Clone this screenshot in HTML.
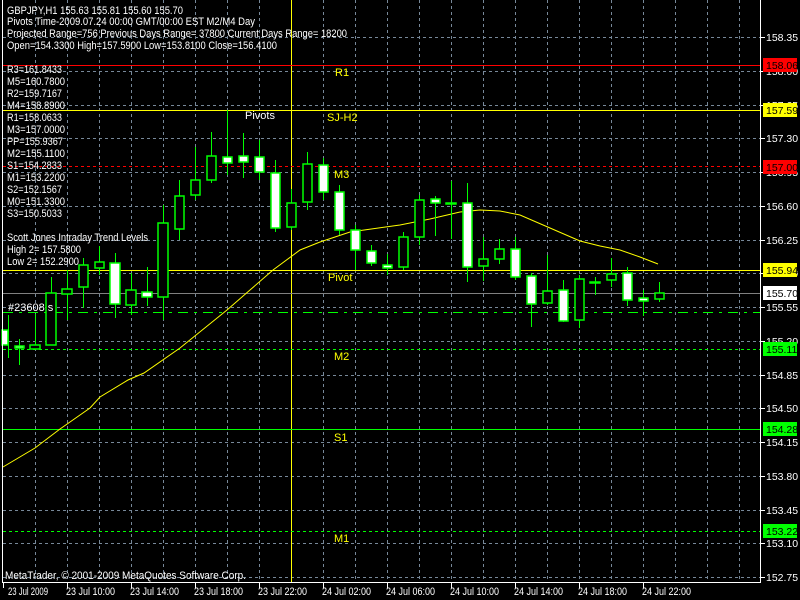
<!DOCTYPE html>
<html><head><meta charset="utf-8"><style>
html,body{margin:0;padding:0;background:#000;width:800px;height:600px;overflow:hidden}
svg{display:block}
text{font-family:"Liberation Sans","DejaVu Sans",sans-serif;font-size:11px}
.ax text{font-size:10.5px}
</style></head><body>
<svg width="800" height="600" xmlns="http://www.w3.org/2000/svg">
<rect width="800" height="600" fill="#000"/>
<g stroke="#778899" stroke-width="1" stroke-dasharray="3,3">
<path d="M3 37.5H760M3 71.5H760M3 105.5H760M3 138.5H760M3 172.5H760M3 206.5H760M3 240.5H760M3 273.5H760M3 307.5H760M3 341.5H760M3 375.5H760M3 408.5H760M3 442.5H760M3 476.5H760M3 510.5H760M3 543.5H760M3 577.5H760"/>
<path d="M35.5 0V582M67.5 0V582M99.5 0V582M131.5 0V582M163.5 0V582M195.5 0V582M227.5 0V582M259.5 0V582M323.5 0V582M355.5 0V582M387.5 0V582M419.5 0V582M451.5 0V582M483.5 0V582M515.5 0V582M547.5 0V582M579.5 0V582M611.5 0V582M643.5 0V582M675.5 0V582M707.5 0V582M739.5 0V582"/>
</g>
<path d="M291.5 0V582" stroke="#ffff00"/>
<path d="M3 65.5H760" stroke="#ff0000"/>
<path d="M3 110.5H760" stroke="#ffff00"/>
<path d="M3 166.5H760" stroke="#ff0000" stroke-dasharray="3,3"/>
<path d="M3 270.5H760" stroke="#ffff00"/>
<path d="M3 293.5H760" stroke="#808080"/>
<path d="M3 312.5H760" stroke="#00ff00" stroke-dasharray="10,6,3,6"/>
<path d="M3 349.5H760" stroke="#00ff00" stroke-dasharray="3,3"/>
<path d="M3 429.5H760" stroke="#00ff00"/>
<path d="M3 531.5H760" stroke="#00ff00" stroke-dasharray="3,3"/>
<polyline fill="none" stroke="#ffff00" stroke-width="1" points="3,467 35,448 60,429 90,408 100,397 128,380 144,373 180,348 227,310 250,290 273,270 300,250 320,242 350,232 400,225 430,219 460,212 480,210 500,211 520,215 550,228 580,241 600,246 620,250 640,257 658,264"/>
<g stroke="#00ff00" stroke-width="1">
<path d="M8.5 315V358M19.5 339V365M35.5 314V349M51.5 277V345M67.5 270V320M83.5 258V308M99.5 246V275M115.5 253V318M131.5 273V315M147.5 267V306M163.5 205V320M179.5 180V240M195.5 147V200M211.5 132V183M227.5 110V175M243.5 133V178M259.5 140V180M275.5 160V232M291.5 189V230M307.5 152V210M323.5 158V200M339.5 185V235M355.5 225V270M371.5 245V266M387.5 254V275M403.5 232V270M419.5 195V245M435.5 196V236M451.5 181V239M467.5 183V282M483.5 237V281M499.5 239V264M515.5 237V280M531.5 273V327M547.5 255V305M563.5 280V322M579.5 275V328M595.5 277V295M611.5 258V287M627.5 267V306M643.5 290V316M659.5 282V302"/>
</g>
<g stroke="#00ff00" stroke-width="1.5">
<rect x="2" y="330" width="6" height="15" fill="#fff"/>
<rect x="15" y="346" width="9" height="2" fill="#fff"/>
<rect x="30" y="345" width="10" height="4" fill="#000"/>
<rect x="46" y="293" width="10" height="52" fill="#000"/>
<rect x="62" y="289" width="10" height="5" fill="#000"/>
<rect x="79" y="265" width="9" height="22" fill="#000"/>
<rect x="95" y="262" width="9" height="6" fill="#000"/>
<rect x="110" y="263" width="10" height="41" fill="#fff"/>
<rect x="126" y="290" width="10" height="15" fill="#000"/>
<rect x="142" y="292" width="10" height="5" fill="#fff"/>
<rect x="158" y="223" width="10" height="74" fill="#000"/>
<rect x="175" y="196" width="9" height="33" fill="#000"/>
<rect x="191" y="180" width="9" height="15" fill="#000"/>
<rect x="207" y="156" width="9" height="24" fill="#000"/>
<rect x="223" y="157" width="9" height="6" fill="#fff"/>
<rect x="239" y="156" width="9" height="6" fill="#fff"/>
<rect x="255" y="157" width="9" height="15" fill="#fff"/>
<rect x="271" y="173" width="9" height="55" fill="#fff"/>
<rect x="287" y="203" width="9" height="24" fill="#000"/>
<rect x="303" y="164" width="9" height="38" fill="#000"/>
<rect x="319" y="165" width="9" height="27" fill="#fff"/>
<rect x="335" y="192" width="9" height="38" fill="#fff"/>
<rect x="351" y="230" width="9" height="20" fill="#fff"/>
<rect x="367" y="251" width="9" height="12" fill="#fff"/>
<rect x="383" y="265" width="9" height="3" fill="#fff"/>
<rect x="399" y="237" width="9" height="30" fill="#000"/>
<rect x="415" y="200" width="9" height="37" fill="#000"/>
<rect x="431" y="199" width="9" height="4" fill="#fff"/>
<rect x="446" y="203" width="10" height="1" fill="#000"/>
<rect x="463" y="203" width="9" height="64" fill="#fff"/>
<rect x="479" y="259" width="9" height="7" fill="#000"/>
<rect x="495" y="249" width="9" height="10" fill="#000"/>
<rect x="511" y="249" width="9" height="28" fill="#fff"/>
<rect x="527" y="276" width="9" height="28" fill="#fff"/>
<rect x="543" y="291" width="9" height="12" fill="#000"/>
<rect x="559" y="290" width="9" height="31" fill="#fff"/>
<rect x="575" y="279" width="9" height="41" fill="#000"/>
<rect x="590" y="282" width="10" height="1" fill="#000"/>
<rect x="607" y="274" width="9" height="6" fill="#000"/>
<rect x="623" y="273" width="9" height="27" fill="#fff"/>
<rect x="639" y="298" width="9" height="3" fill="#fff"/>
<rect x="655" y="293" width="9" height="6" fill="#000"/>
</g>
<path d="M2.5 0V582.5H760.5V0" fill="none" stroke="#fff"/>
<g stroke="#fff"><path d="M3.5 583V588M67.5 583V588M131.5 583V588M195.5 583V588M259.5 583V588M323.5 583V588M387.5 583V588M451.5 583V588M515.5 583V588M579.5 583V588M643.5 583V588"/></g>
<g fill="#fff">
<text x="8" y="595" textLength="40" lengthAdjust="spacingAndGlyphs">23 Jul 2009</text>
<text x="66" y="595" textLength="49" lengthAdjust="spacingAndGlyphs">23 Jul 10:00</text>
<text x="130" y="595" textLength="49" lengthAdjust="spacingAndGlyphs">23 Jul 14:00</text>
<text x="194" y="595" textLength="49" lengthAdjust="spacingAndGlyphs">23 Jul 18:00</text>
<text x="258" y="595" textLength="49" lengthAdjust="spacingAndGlyphs">23 Jul 22:00</text>
<text x="322" y="595" textLength="49" lengthAdjust="spacingAndGlyphs">24 Jul 02:00</text>
<text x="386" y="595" textLength="49" lengthAdjust="spacingAndGlyphs">24 Jul 06:00</text>
<text x="450" y="595" textLength="49" lengthAdjust="spacingAndGlyphs">24 Jul 10:00</text>
<text x="514" y="595" textLength="49" lengthAdjust="spacingAndGlyphs">24 Jul 14:00</text>
<text x="578" y="595" textLength="49" lengthAdjust="spacingAndGlyphs">24 Jul 18:00</text>
<text x="642" y="595" textLength="49" lengthAdjust="spacingAndGlyphs">24 Jul 22:00</text>
</g>
<g stroke="#fff"><path d="M761 37.5H765M761 71.5H765M761 105.5H765M761 138.5H765M761 172.5H765M761 206.5H765M761 240.5H765M761 273.5H765M761 307.5H765M761 341.5H765M761 375.5H765M761 408.5H765M761 442.5H765M761 476.5H765M761 510.5H765M761 543.5H765M761 577.5H765"/></g>
<g fill="#fff" class="ax">
<text x="766" y="41">158.35</text><text x="766" y="75">158.00</text><text x="766" y="109">157.65</text><text x="766" y="142">157.30</text><text x="766" y="176">156.95</text><text x="766" y="210">156.60</text><text x="766" y="244">156.25</text><text x="766" y="277">155.90</text><text x="766" y="311">155.55</text><text x="766" y="345">155.20</text><text x="766" y="379">154.85</text><text x="766" y="412">154.50</text><text x="766" y="446">154.15</text><text x="766" y="480">153.80</text><text x="766" y="514">153.45</text><text x="766" y="547">153.10</text><text x="766" y="581">152.75</text>
</g>
<g class="ax">
<rect x="763" y="58" width="34" height="14" fill="#ff0000"/><text x="766" y="69" fill="#000">158.06</text>
<rect x="763" y="103" width="34" height="14" fill="#ffff00"/><text x="766" y="114" fill="#000">157.59</text>
<rect x="763" y="160" width="34" height="14" fill="#ff0000"/><text x="766" y="171" fill="#000">157.00</text>
<rect x="763" y="263" width="34" height="14" fill="#ffff00"/><text x="766" y="274" fill="#000">155.94</text>
<rect x="763" y="286" width="34" height="14" fill="#fff"/><text x="766" y="297" fill="#000">155.70</text>
<rect x="763" y="342" width="34" height="14" fill="#00ff00"/><text x="766" y="353" fill="#000">155.11</text>
<rect x="763" y="422" width="34" height="14" fill="#00ff00"/><text x="766" y="433" fill="#000">154.28</text>
<rect x="763" y="524" width="34" height="14" fill="#00ff00"/><text x="766" y="535" fill="#000">153.22</text>
</g>
<g fill="#fff">
<text x="7" y="14" textLength="176" lengthAdjust="spacingAndGlyphs">GBPJPY,H1  155.63 155.81 155.60 155.70</text>
<text x="7" y="25" textLength="248" lengthAdjust="spacingAndGlyphs">Pivots Time-2009.07.24 00:00 GMT/00:00 EST M2/M4 Day</text>
<text x="7" y="37" textLength="340" lengthAdjust="spacingAndGlyphs">Projected Range=756 Previous Days Range= 37800 Current Days Range= 18200</text>
<text x="7" y="49" textLength="270" lengthAdjust="spacingAndGlyphs">Open=154.3300 High=157.5900 Low=153.8100 Close=156.4100</text>
<text x="7" y="73" textLength="55" lengthAdjust="spacingAndGlyphs">R3=161.8433</text><text x="7" y="85" textLength="58" lengthAdjust="spacingAndGlyphs">M5=160.7800</text><text x="7" y="97" textLength="55" lengthAdjust="spacingAndGlyphs">R2=159.7167</text><text x="7" y="109" textLength="58" lengthAdjust="spacingAndGlyphs">M4=158.8900</text>
<text x="7" y="121" textLength="55" lengthAdjust="spacingAndGlyphs">R1=158.0633</text><text x="7" y="133" textLength="58" lengthAdjust="spacingAndGlyphs">M3=157.0000</text><text x="7" y="145" textLength="56" lengthAdjust="spacingAndGlyphs">PP=155.9367</text><text x="7" y="157" textLength="58" lengthAdjust="spacingAndGlyphs">M2=155.1100</text>
<text x="7" y="169" textLength="55" lengthAdjust="spacingAndGlyphs">S1=154.2833</text><text x="7" y="181" textLength="58" lengthAdjust="spacingAndGlyphs">M1=153.2200</text><text x="7" y="193" textLength="55" lengthAdjust="spacingAndGlyphs">S2=152.1567</text><text x="7" y="205" textLength="58" lengthAdjust="spacingAndGlyphs">M0=151.3300</text><text x="7" y="217" textLength="55" lengthAdjust="spacingAndGlyphs">S3=150.5033</text>
<text x="7" y="241" textLength="141" lengthAdjust="spacingAndGlyphs">Scott Jones Intraday Trend Levels</text><text x="7" y="253" textLength="74" lengthAdjust="spacingAndGlyphs">High 2= 157.5800</text><text x="7" y="265" textLength="72" lengthAdjust="spacingAndGlyphs">Low 2= 152.2900</text>
<text x="8" y="311">#23608 s</text>
<text x="245" y="119">Pivots</text>
<text x="5" y="579" textLength="241" lengthAdjust="spacingAndGlyphs">MetaTrader, © 2001-2009 MetaQuotes Software Corp.</text>
</g>
<g fill="#ffff00">
<text x="335" y="76">R1</text><text x="327" y="121">SJ-H2</text><text x="334" y="178">M3</text><text x="328" y="281">Pivot</text><text x="334" y="360">M2</text><text x="334" y="441">S1</text><text x="334" y="542">M1</text>
</g>
</svg>
</body></html>
